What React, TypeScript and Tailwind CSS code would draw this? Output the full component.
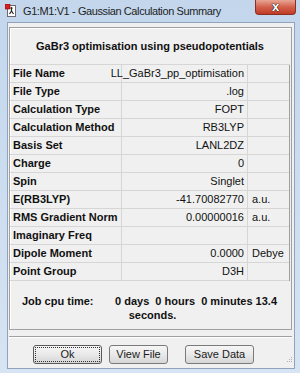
import React from 'react';

const ROWS: [string, string, string][] = [
  ['File Name', 'LL_GaBr3_pp_optimisation', ''],
  ['File Type', '.log', ''],
  ['Calculation Type', 'FOPT', ''],
  ['Calculation Method', 'RB3LYP', ''],
  ['Basis Set', 'LANL2DZ', ''],
  ['Charge', '0', ''],
  ['Spin', 'Singlet', ''],
  ['E(RB3LYP)', '-41.70082770', 'a.u.'],
  ['RMS Gradient Norm', '0.00000016', 'a.u.'],
  ['Imaginary Freq', '', ''],
  ['Dipole Moment', '0.0000', 'Debye'],
  ['Point Group', 'D3H', ''],
];

function AppIcon() {
  return (
    <svg width="12" height="13" viewBox="0 0 12 13">
      <rect x="2.5" y="1.5" width="8" height="11" fill="#fff" stroke="#6b6b6b" />
      <path d="M6.5 4 L6.5 7 M6.5 7 L4.5 10 M6.5 7 L8.5 10" stroke="#222" strokeWidth="1.2" fill="none" />
      <circle cx="6.5" cy="4" r="1" fill="#222" />
      <rect x="0" y="0" width="5" height="5" fill="#d81e1e" stroke="#7a0d0d" strokeWidth="0.6" />
    </svg>
  );
}

function WinButton({ label, width, focused }: { label: string; width: string; focused?: boolean }) {
  return (
    <div
      className={`${width} h-[19px] rounded-[3px] border ${focused ? 'border-[#5a5a5a]' : 'border-[#7a7a7a]'} bg-gradient-to-b from-[#f6f6f6] via-[#e9e9e9] to-[#d6d6d6] p-[2px]`}
    >
      <div
        className={`h-full w-full flex items-center justify-center text-[11px] text-[#1a1a1a] leading-none ${focused ? 'outline outline-1 outline-dotted outline-[#333]' : ''}`}
      >
        {label}
      </div>
    </div>
  );
}

export default function App() {
  return (
    <div
      className="w-[300px] h-[373px] bg-gradient-to-b from-[#c3d6ec] to-[#d6e4f3] flex flex-col overflow-hidden"
      style={{ fontFamily: '"Liberation Sans", Arial, sans-serif' }}
    >
      {/* Title bar */}
      <div className="h-[22px] flex items-start relative shrink-0">
        <div className="ml-[5px] mt-[4px]">
          <AppIcon />
        </div>
        <span className="ml-[6px] mt-[4px] text-[11px] tracking-[-0.4px] text-[#1e1e1e] leading-[14px]">
          G1:M1:V1 - Gaussian Calculation Summary
        </span>
        <div className="absolute left-[255px] top-0 w-[41px] h-[15px] rounded-b-[4px] border border-t-0 border-[#8b2f22] bg-gradient-to-b from-[#e7a596] via-[#d2604c] to-[#c23a22] flex items-center justify-center">
          <span className="text-white font-bold text-[13px] leading-none -mt-[2px] [text-shadow:0_0_1px_#222,0_0_1px_#222,0_0_1px_#222]">x</span>
        </div>
      </div>

      {/* Client area */}
      <div className="ml-[7px] mr-[5px] mb-[4px] flex-1 bg-[#f0f0f0] border border-[#8fa3bc] flex flex-col">
        {/* group box */}
        <div className="mt-[4px] ml-[1px] mr-[2px] h-[303px] border border-[#a0a0a0] shadow-[inset_1px_1px_0_#ffffff] flex flex-col">
          <div className="h-[37px] border-b border-[#d6d6d6] mr-[1px] flex items-center justify-center text-[11px] font-bold text-[#111]">
            GaBr3 optimisation using pseudopotentials
          </div>
          <div className="mr-[1px] border-r border-[#a0a0a0] flex flex-col">
            {ROWS.map(([label, value, unit]) => (
              <div key={label} className="h-[18px] border-b border-[#d6d6d6] flex text-[11px] text-[#111]">
                <div className="w-[112px] border-r border-[#d6d6d6] pl-[3px] flex items-center font-bold">
                  {label}
                </div>
                <div className="w-[126px] border-r border-[#d6d6d6] pr-[3px] flex items-center justify-end">
                  {value}
                </div>
                <div className="flex-1 pl-[4px] flex items-center">{unit}</div>
              </div>
            ))}
          </div>
          <div className="mt-[14px] flex text-[11px] font-bold text-[#111] leading-[13px]">
            <span className="ml-[12px] w-[93px]">Job cpu time:</span>
            <span className="whitespace-pre">0 days  0 hours  0 minutes 13.4</span>
          </div>
          <div className="text-center text-[11px] font-bold text-[#111] leading-[13px] mt-[1px] ml-[4px]">
            seconds.
          </div>
        </div>

        {/* separator */}
        <div className="mt-[6px] ml-[1px] mr-[2px] h-[2px] border-t border-[#a0a0a0] border-b border-b-white" />

        {/* buttons */}
        <div className="mt-[7px] flex items-start relative">
          <div className="ml-[25px]">
            <WinButton label="Ok" width="w-[69px]" focused />
          </div>
          <div className="ml-[7px]">
            <WinButton label="View File" width="w-[59px]" />
          </div>
          <div className="ml-[17px]">
            <WinButton label="Save Data" width="w-[69px]" />
          </div>
          <svg className="absolute right-[1px] top-[12px]" width="8" height="8" viewBox="0 0 8 8">
            <rect x="6" y="0" width="1" height="1" fill="#b0b0b0" />
            <rect x="4" y="2" width="1" height="1" fill="#b0b0b0" />
            <rect x="6" y="2" width="1" height="1" fill="#b0b0b0" />
            <rect x="2" y="4" width="1" height="1" fill="#b0b0b0" />
            <rect x="4" y="4" width="1" height="1" fill="#b0b0b0" />
            <rect x="6" y="4" width="1" height="1" fill="#b0b0b0" />
          </svg>
        </div>
      </div>
    </div>
  );
}
